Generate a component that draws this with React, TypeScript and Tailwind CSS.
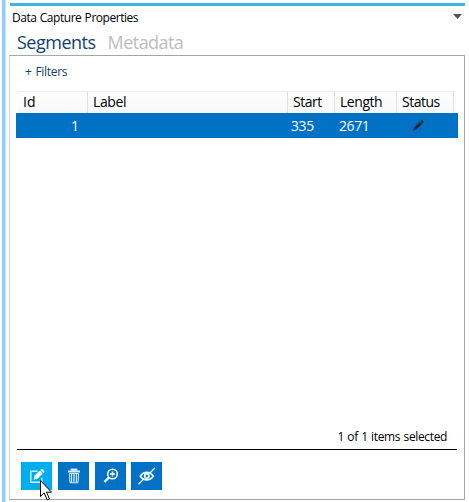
import type { ReactNode } from "react";

function ToolButton({ label, active = false, className = "", children }: { label: string; active?: boolean; className?: string; children: ReactNode }) {
  return (
    <button aria-label={label} className={`relative h-7 w-[31px] shrink-0 ${active ? "bg-[#00adef]" : "bg-[#0072c6]"} ${className}`}>
      {children}
    </button>
  );
}

const head = "h-full shrink-0 border-r border-[#dedfe1] pl-[5px] leading-[20px]";

export default function App() {
  return (
    <div className="flex h-[502px] w-[469px] overflow-hidden bg-white font-['Open_Sans','Noto_Sans',sans-serif] text-black">
      <div className="ml-[2px] h-full w-[4px] shrink-0 border-r border-[#c5e5fb] bg-[#8dcffa]" />
      <main className="ml-[3px] flex w-[456px] shrink-0 flex-col pt-[3px]">
        <div className="ml-px h-[3px] shrink-0 bg-[#41b1e1]" />
        <header className="flex h-[24px] shrink-0 items-center justify-between pl-[3px] pr-[3px]">
          <span className="whitespace-nowrap text-[12px] tracking-[-0.46px] [word-spacing:0.6px]">Data Capture Properties</span>
          <svg width="9" height="5" viewBox="0 0 9 5" className="-mt-[3px]">
            <path d="M0 0h9L4.5 5z" fill="#555" />
          </svg>
        </header>
        <nav className="flex h-[25px] shrink-0 items-start gap-[12px] pl-[8px] text-[18px] leading-[25px]">
          <span className="tracking-[-0.5px] text-[#123f70]">Segments</span>
          <span className="tracking-[-0.55px] text-[#bdbdbd]">Metadata</span>
        </nav>
        <section className="flex h-[445px] shrink-0 flex-col border border-[#a6a6a6] border-l-[#d4d4d4]">
          <div className="h-[35px] shrink-0 pl-[15px] pt-[7px] text-[12px] leading-[18px] tracking-[-0.3px] text-[#123f70] [word-spacing:1px]">+ Filters</div>
          <div className="ml-[8px] flex h-[22px] w-[438px] shrink-0 border-t border-[#eeeff0] bg-linear-to-b from-white to-[#f6f7f9] text-[14px]">
            <div className={`${head} w-[70px]`}>Id</div>
            <div className={`${head} w-[200px] tracking-[-0.4px]`}>Label</div>
            <div className={`${head} w-[47px] tracking-[-0.5px]`}>Start</div>
            <div className={`${head} w-[62px] tracking-[-0.45px]`}>Length</div>
            <div className={`${head} w-[57px] tracking-[-0.5px]`}>Status</div>
          </div>
          <div className="ml-[6px] flex h-[25px] w-[442px] shrink-0 items-center bg-[#0072c6] text-[14px] text-white">
            <span className="w-[63px] text-right">1</span>
            <span className="ml-[212px] w-[48px] tracking-[-0.4px]">335</span>
            <span className="w-[74px] tracking-[-0.4px]">2671</span>
            <svg width="11" height="11" viewBox="0 0 12 12">
              <path d="M.5 11 1.5 7.8 7.6 1.8 9.8 4 3.8 10z M8.3 1.1 9 .4 10.2.4 11.2 1.4 11.2 2.5 10.5 3.3z" fill="#242a30" stroke="#242a30" strokeWidth=".4" />
            </svg>
          </div>
          <div className="flex flex-1 items-end justify-end pr-[17px] pb-[3px] text-[12px] leading-[18px] tracking-[-0.36px] [word-spacing:0.6px]">
            1 of 1 items selected
          </div>
          <div className="ml-[7px] h-px w-[440px] shrink-0 bg-black" />
          <div className="flex h-[49px] shrink-0 pl-[11px] pt-[12px]">
            <ToolButton label="Edit" active>
              <svg width="31" height="28" viewBox="0 0 31 28" fill="none">
                <path d="M16.5 9.2H9.8v11h11v-4.5" stroke="#d4f2fd" strokeWidth="1.4" />
                <path d="m12.5 17.8 1-4 5.2-5.2 3 3-5.2 5.2z M19.3 8l1-1h1.2l1.7 1.7v1.2l-1 1z" fill="#fff" />
              </svg>
              <svg width="12" height="21" viewBox="0 0 12 21" className="absolute left-[19px] top-[18px]">
                <path d="M.5.5v16l3.7-3.6 3 7 2.3-1-3-6.7h5z" fill="#fff" stroke="#000" />
              </svg>
            </ToolButton>
            <ToolButton label="Delete" className="ml-[6px]">
              <svg width="31" height="28" viewBox="0 0 31 28" fill="none" stroke="#d6eafa">
                <path d="M10 9.5h12M13.5 8.3v-.8h5v.8" strokeWidth="1.8" />
                <path d="M11.3 11.5h9.4l-.7 9.3h-8z" />
                <path d="M13.5 11v9.5M16 11v9.5M18.5 11v9.5" strokeWidth="1.3" />
              </svg>
            </ToolButton>
            <ToolButton label="Zoom" className="ml-[6px]">
              <svg width="31" height="28" viewBox="0 0 31 28" fill="none" stroke="#fff">
                <circle cx="17.5" cy="12" r="4.8" strokeWidth="1.6" />
                <path d="m14 15.5-4.5 4.5" strokeWidth="2.4" />
                <path d="M15 12h5M17.5 9.5v5" strokeWidth="1.4" />
              </svg>
            </ToolButton>
            <ToolButton label="Hide" className="ml-[5px]">
              <svg width="31" height="28" viewBox="0 0 31 28" fill="none" stroke="#f4faff">
                <path d="M9.3 14.2c3.6-5 9.4-5 13 0-3.6 5-9.4 5-13 0Z" strokeWidth="1.7" />
                <circle cx="15.8" cy="14" r="2.1" strokeWidth="1.8" />
                <path d="m24 6-5.5 5.2M12.5 17.2l-5 5" strokeWidth="1.3" />
              </svg>
            </ToolButton>
          </div>
        </section>
      </main>
    </div>
  );
}
